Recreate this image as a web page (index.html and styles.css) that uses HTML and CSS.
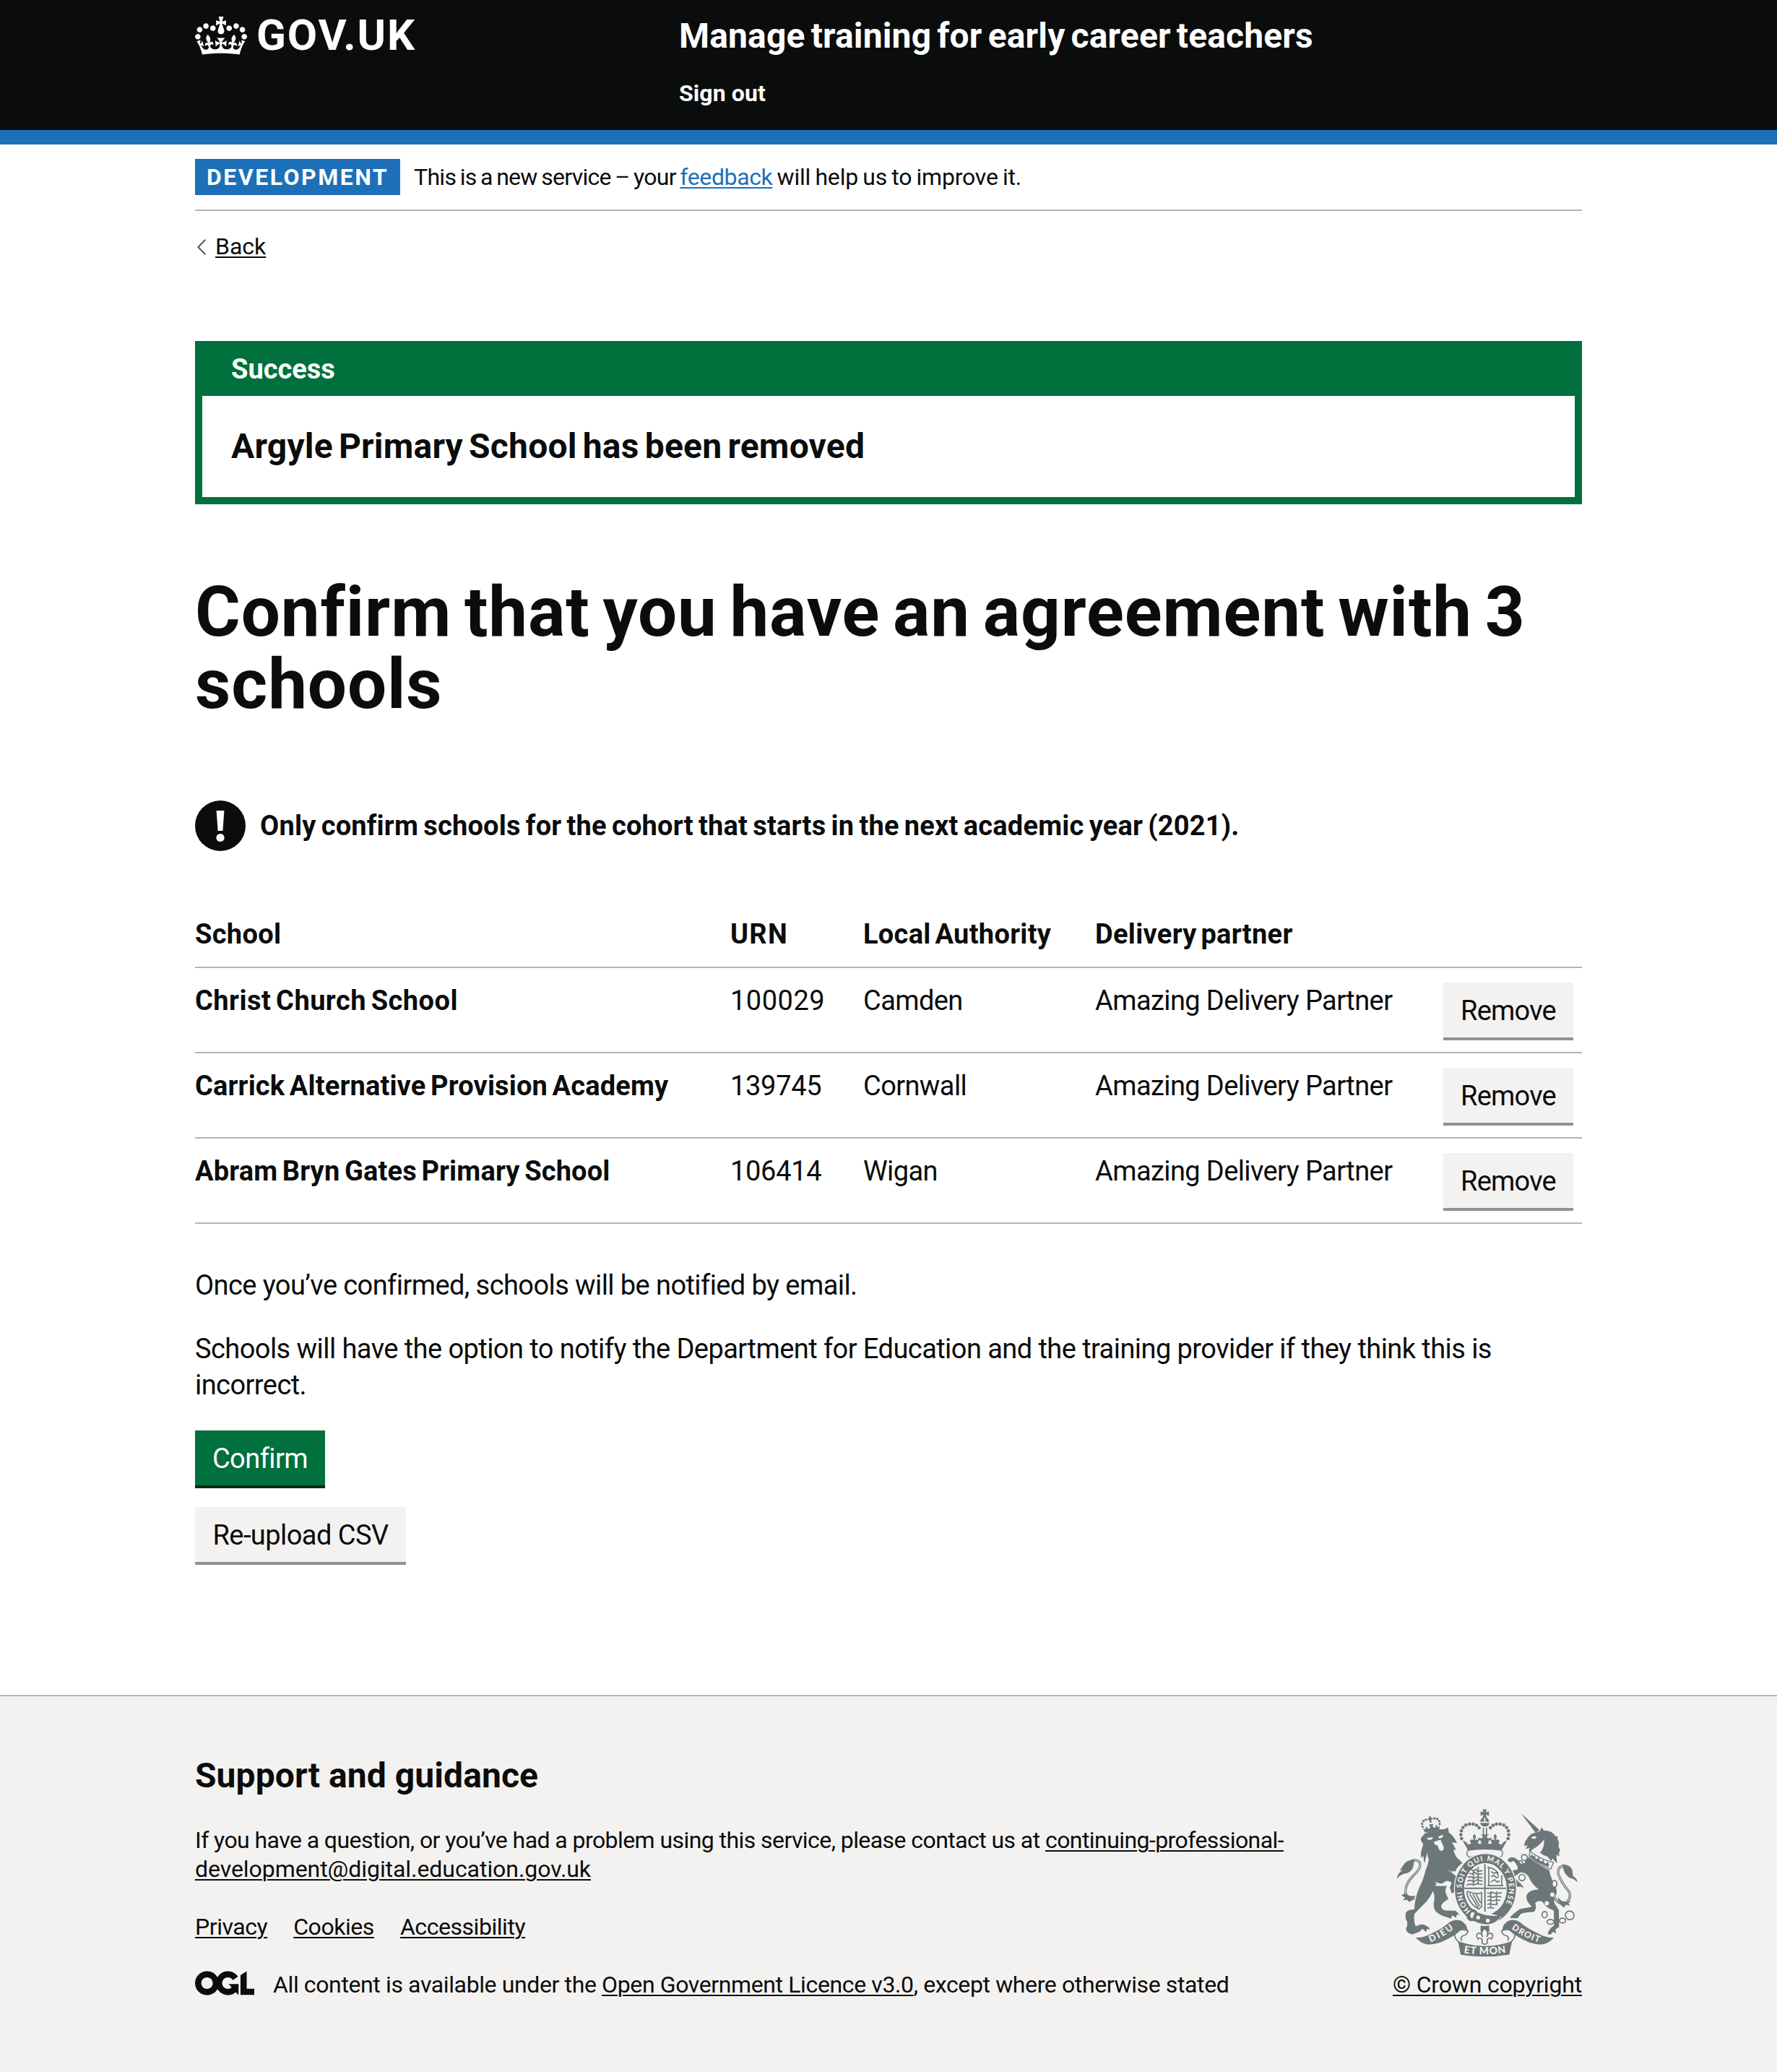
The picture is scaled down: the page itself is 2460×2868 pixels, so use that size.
FILE: index.html
```html
<!DOCTYPE html>
<html lang="en">
<head>
<meta charset="utf-8">
<title>Confirm that you have an agreement with 3 schools – Manage training for early career teachers</title>
<link rel="stylesheet" href="styles.css">
</head>
<body>
<header class="header">
  <div class="container header-inner">
    <a class="logo" href="#">
      <svg class="logo-crown" viewBox="0 0 132 97" width="72" height="53" aria-hidden="true"><path fill="currentColor" fill-rule="evenodd" d="M25 30.2c3.5 1.5 7.7-.2 9.1-3.7 1.5-3.6-.2-7.8-3.9-9.2-3.6-1.4-7.6.3-9.1 3.9-1.4 3.5.3 7.5 3.9 9zM9 39.5c3.6 1.5 7.8-.2 9.2-3.7 1.5-3.6-.2-7.8-3.9-9.1-3.6-1.5-7.6.2-9.1 3.8-1.4 3.5.3 7.5 3.8 9zM4.4 57.2c3.5 1.5 7.7-.2 9.1-3.8 1.5-3.6-.2-7.7-3.9-9.1-3.5-1.5-7.6.3-9.1 3.8-1.4 3.5.3 7.6 3.9 9.1zm38.3-21.4c3.5 1.5 7.7-.2 9.1-3.8 1.5-3.6-.2-7.7-3.9-9.1-3.6-1.5-7.6.3-9.1 3.8-1.3 3.6.4 7.7 3.9 9.1zm64.4-5.6c-3.6 1.5-7.8-.2-9.1-3.7-1.5-3.6.2-7.8 3.8-9.2 3.6-1.4 7.7.3 9.2 3.9 1.3 3.5-.4 7.5-3.9 9zm15.9 9.3c-3.6 1.5-7.7-.2-9.1-3.7-1.5-3.6.2-7.8 3.7-9.1 3.6-1.5 7.7.2 9.2 3.8 1.5 3.5-.3 7.5-3.8 9zm4.7 17.7c-3.6 1.5-7.8-.2-9.2-3.8-1.5-3.6.2-7.7 3.9-9.1 3.6-1.5 7.7.3 9.2 3.8 1.3 3.5-.4 7.6-3.9 9.1zM89.3 35.8c-3.6 1.5-7.8-.2-9.2-3.8-1.4-3.6.2-7.7 3.9-9.1 3.6-1.5 7.7.3 9.2 3.8 1.4 3.6-.3 7.7-3.9 9.1zM69.7 17.7l8.9 4.7V9.3l-8.9 2.8c-.2-.3-.5-.6-.9-.9L72.4 0H59.6l3.5 11.2c-.3.3-.6.5-.9.9l-8.8-2.8v13.1l8.8-4.7c.3.3.6.7.9.9l-5 15.4v.1c-.2.8-.4 1.6-.4 2.4 0 4.1 3.1 7.5 7 8.1h.2c.3 0 .7.1 1 .1.4 0 .7 0 1-.1h.2c4-.6 7.1-4.1 7.1-8.1 0-.8-.1-1.7-.4-2.4V34l-5.1-15.4c.4-.2.7-.6 1-.9zM66 92.8c16.9 0 32.8 1.1 47.1 3.2 4-16.9 8.9-26.7 14-33.5l-9.6-3.4c1 4.9 1.1 7.2 0 10.2-1.5-1.4-3-4.3-4.2-8.7L108.6 76c2.8-2 5-3.2 7.5-3.3-4.4 9.4-10 11.9-13.6 11.2-4.3-.8-6.3-4.6-5.6-7.9 1-4.7 5.7-5.9 8-.5 4.3-8.7-3-11.4-7.6-8.8 7.1-7.2 7.9-13.5 2.1-21.1-8 6.1-8.1 12.3-4.5 20.8-4.7-5.4-12.1-2.5-9.5 6.2 3.4-5.2 7.9-2 7.2 3.1-.6 4.3-6.4 7.8-13.5 7.2-10.3-.9-10.9-8-11.2-13.8 2.5-.5 7.1 1.8 11 7.3L80.2 60c-4.1 4.4-8 5.3-12.3 5.4 1.4-4.4 8-11.6 8-11.6H55.5s6.4 7.2 7.9 11.6c-4.2-.1-8-1-12.3-5.4l1.4 16.4c3.9-5.5 8.5-7.7 10.9-7.3-.3 5.8-.9 12.8-11.1 13.8-7.2.6-12.9-2.9-13.5-7.2-.7-5 3.8-8.3 7.1-3.1 2.7-8.7-4.6-11.6-9.4-6.2 3.7-8.5 3.6-14.7-4.6-20.8-5.8 7.6-5 13.9 2.2 21.1-4.7-2.6-11.9.1-7.7 8.8 2.3-5.5 7.1-4.2 8.1.5.7 3.3-1.3 7.1-5.7 7.9-3.5.7-9-1.8-13.5-11.2 2.5.1 4.7 1.3 7.5 3.3l-4.7-15.4c-1.2 4.4-2.7 7.2-4.3 8.7-1.1-3-.9-5.3 0-10.2l-9.5 3.4c5 6.9 9.9 16.7 14 33.5 14.8-2.1 30.8-3.2 47.7-3.2z"/></svg>
      <span class="logo-text">GOV.UK</span>
    </a>
    <div class="header-content">
      <a class="service-name" href="#">Manage training for early career teachers</a>
      <a class="header-link" href="#">Sign out</a>
    </div>
  </div>
</header>

<div class="container">
  <div class="phase-banner">
    <strong class="phase-tag">DEVELOPMENT</strong>
    <span class="phase-text"><span class="phase-lead">This is a new service – your </span><a class="phase-link" href="#">feedback</a><span class="phase-tail"> will help us to improve it.</span></span>
  </div>

  <a class="back" href="#">
    <svg class="back-arrow" viewBox="0 0 12 22" width="12" height="22" aria-hidden="true"><path d="M11.2.8 1.4 11l9.8 10.2" fill="none" stroke="#505a5f" stroke-width="2"/></svg>
    <span class="back-text">Back</span>
  </a>

  <main>
    <section class="banner">
      <h2 class="banner-title">Success</h2>
      <p class="banner-body">Argyle Primary School has been removed</p>
    </section>

    <h1 class="title">Confirm that you have an agreement with 3 schools</h1>

    <div class="warning">
      <svg class="warning-icon" viewBox="0 0 70 70" width="70" height="70" aria-hidden="true"><circle cx="35" cy="35" r="35" fill="#0b0c0c"/><path d="M29.6 14h10.8l-2 28h-6.8z" fill="#fff"/><circle cx="35" cy="51.5" r="5.6" fill="#fff"/></svg>
      <strong class="warning-text">Only confirm schools for the cohort that starts in the next academic year (2021).</strong>
    </div>

    <table class="schools">
      <colgroup><col class="col-school"><col class="col-urn"><col class="col-la"><col class="col-partner"><col></colgroup>
      <thead>
        <tr><th>School</th><th class="urn-head">URN</th><th>Local Authority</th><th>Delivery partner</th><th></th></tr>
      </thead>
      <tbody>
        <tr><th class="wide">Christ Church School</th><td class="number wide">100029</td><td>Camden</td><td>Amazing Delivery Partner</td><td><button class="button secondary remove">Remove</button></td></tr>
        <tr><th>Carrick Alternative Provision Academy</th><td class="number">139745</td><td>Cornwall</td><td>Amazing Delivery Partner</td><td><button class="button secondary remove">Remove</button></td></tr>
        <tr><th>Abram Bryn Gates Primary School</th><td class="number">106414</td><td>Wigan</td><td>Amazing Delivery Partner</td><td><button class="button secondary remove">Remove</button></td></tr>
      </tbody>
    </table>

    <p class="body">Once you’ve confirmed, schools will be notified by email.</p>
    <p class="body">Schools will have the option to notify the Department for Education and the training provider if they think this is incorrect.</p>

    <div class="actions">
      <button class="button confirm">Confirm</button>
      <button class="button secondary upload">Re-upload CSV</button>
    </div>
  </main>
</div>

<footer class="footer">
  <div class="container footer-inner">
    <div class="footer-main">
      <h2 class="footer-title">Support and guidance</h2>
      <p class="footer-contact">If you have a question, or you’ve had a problem using this service, please contact us at <a href="#">continuing-professional-<span class="mail-rest">development@digital.education.gov.uk</span></a></p>
      <nav class="footer-links"><a href="#">Privacy</a><a href="#">Cookies</a><a href="#">Accessibility</a></nav>
      <div class="licence">
        <svg class="ogl" viewBox="0 0 483.2 195.7" width="82" height="34" aria-hidden="true"><path fill="currentColor" d="M421.5 142.8V.1l-50.7 32.3v161.1h112.4v-50.7zm-122.3-9.6A47.12 47.12 0 0 1 221 97.8c0-26 21.1-47.1 47.1-47.1 16.7 0 31.4 8.7 39.7 21.8l42.7-27.2A97.63 97.63 0 0 0 268.1 0c-36.5 0-68.3 20.1-85.1 49.7A98 98 0 0 0 97.8 0C43.9 0 0 43.9 0 97.8s43.9 97.8 97.8 97.8c36.5 0 68.3-20.1 85.1-49.7a97.76 97.76 0 0 0 149.6 25.4l19.4 22.2h3v-87.8h-80l24.3 27.5zM97.8 145c-26 0-47.1-21.1-47.1-47.1s21.1-47.1 47.1-47.1 47.1 21.1 47.1 47.1S123.8 145 97.8 145"/></svg>
        <span>All content is available under the <a href="#">Open Government Licence v3.0</a>, except where otherwise stated</span>
      </div>
    </div>
    <div class="crown-column">
      <svg class="crest" viewBox="100 68 756 620" width="252" height="207" aria-hidden="true">
        <defs>
          <path id="motto-ring" d="M410 494A98 116 0 1 1 536 488"/>
          <path id="motto-left" d="M242 624Q304 600 356 552"/>
          <path id="motto-mid" d="M380 668Q467 682 566 665"/>
          <path id="motto-right" d="M578 567Q636 610 712 630"/>
          <g id="crown-half">
            <circle cx="371" cy="193" r="7"/><circle cx="368" cy="177" r="7"/><circle cx="370" cy="161" r="7"/><circle cx="377" cy="147" r="7"/><circle cx="389" cy="137" r="7"/><circle cx="404" cy="133" r="7"/><circle cx="419" cy="133" r="7"/><circle cx="433" cy="138" r="7"/><circle cx="444" cy="148" r="7"/>
            <path d="M376 200q18 8 22 18 12 0 12-10l-6-4 10-8 8 4-3-10q-2-8 5-17 9 9 5 17l-3 10 8-4 10 8-6 5q4 12 16 5l-4-14-10 1 0-12 12 4q5 0 8-9l-10-8h18v61l-70 4-16-27z"/>
          </g>
          <g id="ribbon">
            <path d="M180 604Q212 606 240 590Q290 568 322 540Q342 526 366 533Q392 544 396 574Q380 566 368 574Q330 606 284 624Q240 638 218 630Q198 624 180 604z"/>
            <path d="M348 577q30-12 50 0q-4 18-22 20q-12 8-4 20M345 580q-9 24 14 42" fill="none" stroke="#6c7779" stroke-width="5"/>
          </g>
        </defs>
        <g fill="#6c7779">
          <!-- royal crown -->
          <path d="M458 72h18l-4 13 13-5v19l-13-5 4 14h-18l4-14-12 5v-19l12 5z"/>
          <path d="M448 123q2-15 16-17v17zM470 106q14 2 16 17h-16zM448 128h39q-2 15-19 15t-20-15zM459 148h5v32h-5zM472 148h5v32h-5z"/>
          <use href="#crown-half"/><use href="#crown-half" transform="matrix(-1 0 0 1 935 0)"/>
          <path d="M390 221q78-13 154 0l-8 22q-68-11-138 0z"/>
          <path d="M397 242q-10 18 6 29 62-26 130 0 14-12 5-29-68-11-141 0z" fill="#f3f2f1" stroke="#6c7779" stroke-width="4"/>
          <!-- lion -->
          <g transform="rotate(-9 244 135)"><circle cx="208" cy="138" r="5"/><circle cx="208" cy="126" r="5"/><circle cx="215" cy="116" r="5"/><circle cx="226" cy="112" r="5"/><circle cx="262" cy="112" r="5"/><circle cx="273" cy="116" r="5"/><circle cx="280" cy="126" r="5"/><circle cx="280" cy="138" r="5"/><path d="M240 101h8v7h6v7h-6v12h-8v-12h-6v-7h6zM208 143l10 9 4-14 9 14 8-6-3-12h17l-3 12 8 6 8-14 5 14 9-9-6 21h-60z"/></g>
          <path transform="translate(90 60)" d="M112 130Q120 125 125 115Q165 92 205 95L225 88L228 108Q250 122 262 152L240 148Q248 160 258 180L247 180Q256 212 270 220L285 235Q262 250 255 270L240 268Q262 290 276 310Q290 335 288 365L270 352L262 372L255 352L240 362L232 335L240 318Q228 304 212 312L200 320L185 320Q176 318 172 330L220 330Q208 350 220 370L226 385Q204 396 196 412Q196 430 215 432L255 433Q268 440 273 452L262 448L258 462L243 452L236 466L220 460Q196 454 176 438Q160 420 168 388Q170 366 162 350Q150 382 122 408L86 445Q80 472 90 498Q114 484 132 494Q148 500 149 512L138 508L134 521L118 508Q104 526 94 524L78 531Q54 528 50 510Q58 490 55 478Q44 466 50 440Q60 428 85 427Q86 384 104 340Q124 300 132 264Q142 240 145 220Q138 206 140 190L132 215Q130 228 126 236L122 205L114 214Q110 196 115 180L122 155Q110 146 112 130z"/>
          <path d="M176 442q-38 0-38-28 0-34 32-66 34-30 28-54-8-14-32-10" fill="none" stroke="#6c7779" stroke-width="10"/>
          <path d="M176 442q-38 0-38-28 0-34 32-66 34-30 28-54-8-14-32-10" fill="none" stroke="#f3f2f1" stroke-width="3"/>
          <path d="M176 280q-34 2-46 22l-16 24 14-3q-24 14-26 38 18-22 44-24 24-12 26-36zM180 430q-26 6-42-10l-18 8 16 10-8 12 16-3 10 10 16-10z"/>
          <path d="M228 190l26-2-10 11-14-2zM274 185l22-9-6 14-12 3zM256 206l28-8 5 13q12 20 6 30-12 8-18-4l-6-16-10-2zM312 322l50 26 16 30-22-24zM260 372l26 10 16 2-34-2z" fill="#f3f2f1"/>
          <!-- unicorn -->
          <g transform="translate(465 60)">
            <path d="M152 27L230 98L213 109zM213 109L232 102L238 86L248 100Q284 100 296 124L306 124L304 134Q314 150 308 164L316 182Q308 188 312 207L300 200L302 236L284 216L278 226L262 208Q240 200 232 192Q252 168 248 138Q230 160 214 170Q200 176 194 186L184 184L190 172L172 176L180 161L166 164Q168 142 178 134Q190 112 213 109z"/>
            <path d="M196 128q12-8 22 0l-8 6-12-1z" fill="#f3f2f1"/>
            <path d="M190 186q48 36 98 46l-12 28q-48-14-90-46z" fill="#f3f2f1" stroke="#6c7779" stroke-width="4"/>
            <path d="M197 198l8 10 6-6 2 14 6 3 8-10 4 16 8 3 8-9 2 15 8 3 8-8 4 16-2 6q-44-12-78-40z"/>
            <path d="M188 214Q226 246 270 264Q276 296 290 320Q304 344 300 364Q286 384 292 402L310 430L311 500L296 510L298 528L285 520L276 532L263 530Q268 508 290 494L289 432Q256 420 244 398Q228 386 212 400Q220 430 204 438Q172 438 152 446L138 464L106 463Q118 446 148 426L198 416Q170 390 176 368Q186 346 226 344Q196 322 184 290Q168 272 150 274L126 290Q132 306 150 318L166 338L150 332L136 334L130 318L112 290L108 268L138 262Q144 250 122 226L110 232L97 226Q98 212 116 211Q136 212 152 238Q166 240 170 228Q176 214 188 214z"/>
            <path d="M290 372q14 36 44 30 28-12 20-46-38-46-46-76-6-30 26-34" fill="none" stroke="#6c7779" stroke-width="10"/>
            <path d="M290 372q14 36 44 30 28-12 20-46-38-46-46-76-6-30 26-34" fill="none" stroke="#f3f2f1" stroke-width="3"/>
            <path d="M326 240q34 2 40 26 2 20 4 24 16 8 17 24-16-16-32-18-28-16-29-56zM306 376q12 20 34 20l22-4-12 8 6 12-18-4-6 12q-26-14-26-44z"/>
          </g>
          <g fill="none" stroke="#6c7779" stroke-width="5"><circle cx="632" cy="272" r="12"/><ellipse cx="615" cy="296" rx="9" ry="11"/><circle cx="622" cy="355" r="13" fill="#f3f2f1"/><ellipse cx="757" cy="381" rx="10" ry="14" fill="#f3f2f1"/><ellipse cx="716" cy="509" rx="11" ry="13"/><ellipse cx="740" cy="539" rx="14" ry="10"/><ellipse cx="790" cy="534" rx="13" ry="10"/><circle cx="820" cy="512" r="18"/></g>
          <circle cx="748" cy="426" r="9" fill="#f3f2f1"/><circle cx="725" cy="462" r="9" fill="#f3f2f1"/>
          <!-- garter and shield -->
          <ellipse cx="470" cy="402" rx="131" ry="151" fill="#f3f2f1"/>
          <ellipse cx="470" cy="402" rx="108" ry="126" fill="#f3f2f1" stroke="#6c7779" stroke-width="38"/>
          <path d="M465 300h6v202h-6zM381 397h175v6h-175z"/>
          <g fill="none" stroke="#6c7779" stroke-width="5">
            <path d="M412 322l10 6 8-8 8 10 20-4M404 338l12 2 10-6 10 8 22-3M396 354l14-2 12 6 14-6 22 4M394 370l12-4 16 6 14-8 22 6M392 386l14-4 16 4 14-6 22 4M440 310v74M420 326v58"/>
            <path d="M478 312q28 2 46 26M478 388h66M484 312v76M538 346v42M494 330l12 8 10-6 8 16M494 352l10-6 12 10 10-4M492 374l16-10 12 10 10-6"/>
            <path d="M392 414q8 50 50 72l12-10V418q-20 10-60-6M404 422l36 58M418 424l28 50M432 426l18 34"/>
            <path d="M478 418l12 4 10-6 12 6 26-4M478 434l14-2 10 6 12-6 22 4M478 450l12-2 12 4 12-4 18 2M478 466l12-2 14 4 18-4M478 482l14-2 14 2M492 412v70M516 412v58"/>
          </g>
          <path d="M412 496l10-12 20 4 80 26 16 2q-22 34-66 38-48 0-72-22z" fill="#f3f2f1"/>
          <path d="M428 496q60 28 112 14-24 36-60 40-38-2-66-20zM392 502q4-16 20-16 18 0 24 12l-10 4q-14-8-20 4l2 14q8 8 18 2l6 8q-10 8-24 6-16-6-16-20z"/>
          <circle cx="440" cy="521" r="8" fill="#f3f2f1"/><circle cx="480" cy="534" r="8" fill="#f3f2f1"/>
          <!-- ribbon and badge -->
          <use href="#ribbon"/><use href="#ribbon" transform="matrix(-1 0 0 1 935 0)"/>
          <path d="M356 619q112 42 225 0l-12 56q-100 17-202 0z"/>
          <path d="M450 554q18 4 36 0v28h-36z"/>
          <path d="M467 566q20 18 9 36 2-17 17-16 14 8 2 24-6-8-16 0l-2 10q5 10-10 12-15-2-10-12l-2-10q-10-8-16 0-12-16 2-24 15-1 17 16-11-18 9-36z" fill="#f3f2f1" stroke="#6c7779" stroke-width="5"/>
        </g>
        <g class="motto">
          <text font-size="30"><textPath href="#motto-ring" textLength="500">HONI SOIT QUI MAL Y PENSE</textPath></text>
          <text font-size="38"><textPath href="#motto-left" textLength="112">DIEU</textPath></text>
          <text font-size="42"><textPath href="#motto-mid" textLength="176">ET MON</textPath></text>
          <text font-size="36"><textPath href="#motto-right" textLength="128">DROIT</textPath></text>
        </g>
      </svg>
      <a class="copyright" href="#">© Crown copyright</a>
    </div>
  </div>
</footer>
</body>
</html>
```

FILE: styles.css
```css
* { box-sizing: border-box; }

body {
  margin: 0;
  background: #fff;
  color: #0b0c0c;
  font-family: Roboto, "Liberation Sans", sans-serif;
  font-size: 38px;
  line-height: 50px;
}

h1, h2, p { margin: 0; }

a {
  color: inherit;
  text-decoration-thickness: 2px;
  text-underline-offset: 3px;
}

.container { width: 1920px; margin: 0 auto; }

/* Header */
.header { height: 200px; background: #0b0c0c; border-bottom: 20px solid #1d70b8; color: #fff; }
.header a { text-decoration: none; }
.header-inner { display: flex; padding-top: 20px; }
.logo { display: flex; width: 670px; height: 60px; }
.logo-crown { margin-top: 3px; }
.logo-text { margin-left: 13px; font-size: 60px; font-weight: 700; line-height: 58px; letter-spacing: 1.9px; }
.header-content { display: flex; flex-direction: column; }
.service-name { font-size: 48px; font-weight: 700; line-height: 60px; letter-spacing: 0.15px; word-spacing: -4px; }
.header-link { margin-top: 29px; font-size: 32px; font-weight: 700; line-height: 40px; letter-spacing: 0.1px; }

/* Phase banner */
.phase-banner { display: flex; gap: 19px; height: 92px; padding: 20px 0; border-bottom: 2px solid #b1b4b6; font-size: 32px; }
.phase-tag { width: 284px; height: 50px; padding-left: 16px; background: #1d70b8; color: #fff; letter-spacing: 2.5px; }
.phase-text { white-space: pre; }
.phase-lead { letter-spacing: -0.7px; word-spacing: -1.8px; }
.phase-link { color: #1d70b8; letter-spacing: -0.38px; }
.phase-tail { letter-spacing: -0.2px; word-spacing: -1.5px; }

/* Back link */
.back { display: flex; align-items: center; width: max-content; margin-top: 29px; padding-left: 3px; font-size: 32px; line-height: 40px; text-decoration: none; }
.back-arrow { margin-top: 2px; }
.back-text { margin-left: 13px; text-decoration: underline; text-decoration-thickness: 2px; text-underline-offset: 3px; }

/* Notification banner */
.banner { margin-top: 111px; border: 10px solid #00703c; border-top: 0; }
.banner-title { height: 76px; padding: 14px 40px 0; background: #00703c; color: #fff; font-size: 38px; line-height: 50px; }
.banner-body { height: 140px; padding: 40px 40px 0; font-size: 48px; font-weight: 700; line-height: 60px; letter-spacing: 0.2px; word-spacing: -4px; }

.title { margin-top: 99px; font-size: 96px; line-height: 100px; letter-spacing: 0.9px; word-spacing: -7px; }

.warning { display: flex; gap: 20px; margin-top: 111px; }
.warning-text { padding-top: 10px; letter-spacing: 0.2px; word-spacing: -2.5px; }

/* Schools table */
.schools { width: 100%; margin-top: 90px; border-spacing: 0; table-layout: fixed; }
.col-school { width: 741px; }
.col-urn { width: 184px; }
.col-la { width: 321px; }
.col-partner { width: 482px; }
.schools th, .schools td { padding: 20px 0; border-bottom: 2px solid #b1b4b6; text-align: left; vertical-align: top; }
.schools td { letter-spacing: -0.6px; }
.schools th { letter-spacing: 0.15px; word-spacing: -3px; }
.schools thead th { padding-top: 0; letter-spacing: 0.3px; word-spacing: -4px; }
.schools .urn-head { letter-spacing: 1.26px; }
.schools th.wide { letter-spacing: 0.45px; }
.schools .number { letter-spacing: -0.3px; }
.schools .number.wide { letter-spacing: 0.5px; }

.button {
  display: block;
  height: 76px;
  margin: 0;
  padding: 20px 0 18px;
  border: 0;
  background: #00703c;
  box-shadow: 0 4px 0 #002d18;
  color: #fff;
  font: inherit;
  line-height: 38px;
  letter-spacing: -0.55px;
  text-align: center;
}
.secondary { background: #f3f2f1; box-shadow: 0 4px 0 #929191; color: #0b0c0c; }
.remove { width: 180px; letter-spacing: -0.77px; }
.confirm { width: 180px; }
.upload { width: 292px; }

.body { margin-top: 38px; letter-spacing: -0.56px; }
.schools + .body { margin-top: 60px; letter-spacing: -0.58px; }
.actions { display: grid; justify-items: start; gap: 30px; margin-top: 38px; }

/* Footer */
.footer { min-height: 522px; margin-top: 184px; padding-top: 80px; background: #f3f2f1; border-top: 2px solid #b1b4b6; font-size: 32px; line-height: 40px; letter-spacing: -0.45px; }
.footer-inner { display: flex; justify-content: space-between; align-items: flex-end; }
.footer-main { width: 1540px; }
.footer-title { font-size: 48px; line-height: 60px; letter-spacing: 0.07px; }
.footer-contact { margin-top: 39px; letter-spacing: -0.57px; }
.mail-rest { letter-spacing: -0.06px; }
.footer-links { display: flex; gap: 36px; margin-top: 40px; }
.licence { display: flex; gap: 26px; margin-top: 40px; letter-spacing: -0.38px; }
.ogl { margin-top: 1px; }
.crown-column { display: flex; flex-direction: column; align-items: center; width: 262px; white-space: nowrap; }
.crest { display: block; margin-bottom: 17px; }
.copyright { letter-spacing: -0.17px; }
.motto { fill: #f3f2f1; font-family: Lato, sans-serif; font-weight: 900; letter-spacing: 0; }
```
